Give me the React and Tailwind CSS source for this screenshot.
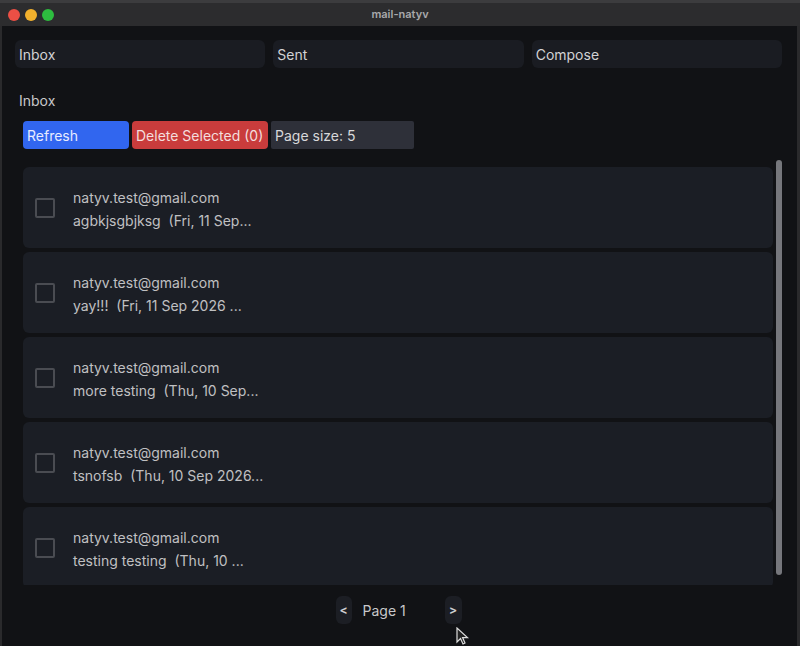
import { useState } from 'react';

const emails = [
  { from: 'natyv.test@gmail.com', preview: 'agbkjsgbjksg  (Fri, 11 Sep...' },
  { from: 'natyv.test@gmail.com', preview: 'yay!!!  (Fri, 11 Sep 2026 ...' },
  { from: 'natyv.test@gmail.com', preview: 'more testing  (Thu, 10 Sep...' },
  { from: 'natyv.test@gmail.com', preview: 'tsnofsb  (Thu, 10 Sep 2026...' },
  { from: 'natyv.test@gmail.com', preview: 'testing testing  (Thu, 10 ...' },
];

function EmailCard({ email, checked, onToggle }) {
  return (
    <div className="flex h-[81px] shrink-0 items-center rounded-md bg-[#1b1e25] pl-3">
      <button
        type="button"
        onClick={onToggle}
        className={`h-5 w-5 shrink-0 rounded-[2px] border-2 border-[#4a4c52] ${checked ? 'bg-[#3166ef]' : ''}`}
      />
      <div className="ml-[18px] flex flex-col whitespace-pre pt-[2px] text-[14px] leading-[23px] text-[#c0c0c2]">
        <span>{email.from}</span>
        <span>{email.preview}</span>
      </div>
    </div>
  );
}

export default function App() {
  const [selected, setSelected] = useState([]);

  const toggle = (i) =>
    setSelected((prev) => (prev.includes(i) ? prev.filter((x) => x !== i) : [...prev, i]));

  return (
    <div className="relative flex h-[646px] w-[800px] flex-col overflow-hidden bg-[#2b2b2d] font-['Inter',sans-serif]">
      {/* desktop strip */}
      <div className="h-[3px] bg-[#3c3c3e]" />

      {/* title bar */}
      <div className="relative flex h-[23px] items-center bg-[#2c2c2e] px-[8px]">
        <div className="flex gap-[5px]">
          <span className="h-3 w-3 rounded-full bg-[#ec4f45]" />
          <span className="h-3 w-3 rounded-full bg-[#f2b12d]" />
          <span className="h-3 w-3 rounded-full bg-[#2dbd3f]" />
        </div>
        <span className="absolute left-1/2 -translate-x-1/2 text-[11px] font-semibold text-[#a9a9ab]">
          mail-natyv
        </span>
      </div>

      {/* window body */}
      <div className="flex flex-1 flex-col border-l-[2px] border-r-[3px] border-[#2a2a2c] bg-[#111215] pl-[13px] pr-[15px] pt-[14px]">
        <nav className="grid grid-cols-3 gap-2">
          {['Inbox', 'Sent', 'Compose'].map((label) => (
            <button
              key={label}
              type="button"
              className="h-7 rounded-md bg-[#1a1c22] px-1 text-left text-[14px] text-[#d2d2d4]"
            >
              {label}
            </button>
          ))}
        </nav>

        <div className="mt-[23px] px-1 text-[14px] leading-5 text-[#c8c8ca]">Inbox</div>

        <div className="ml-2 mt-[10px] flex gap-[3px] text-[14px]">
          <button type="button" className="h-7 w-[106px] rounded-[4px] bg-[#3166ef] px-1 text-left text-[#e8ecff]">
            Refresh
          </button>
          <button type="button" className="h-7 w-[136px] rounded-[4px] bg-[#c93c3c] px-1 text-left text-[#f4dede]">
            Delete Selected ({selected.length})
          </button>
          <button type="button" className="h-7 w-[143px] rounded-[2px] bg-[#2e3039] px-1 text-left text-[#d8d8da]">
            Page size: 5
          </button>
        </div>

        <div className="ml-2 mt-[11px] flex h-[425px] gap-[3px]">
          <div className="flex flex-1 flex-col gap-1 overflow-hidden pt-[7px]">
            {emails.map((email, i) => (
              <EmailCard
                key={i}
                email={email}
                checked={selected.includes(i)}
                onToggle={() => toggle(i)}
              />
            ))}
          </div>
          <div className="mb-[10px] w-[6px] rounded-full bg-[#76777c]" />
        </div>

        <div className="mt-[11px] flex items-center justify-center text-[14px] text-[#c8c8ca]">
          <button type="button" className="h-7 w-4 rounded-md bg-[#1c1e24] text-[12px] font-bold text-[#cfcfd1]">
            &lt;
          </button>
          <span className="w-[93px] pl-[11px]">Page 1</span>
          <button type="button" className="h-7 w-[17px] rounded-md bg-[#1c1e24] text-[12px] font-bold text-[#cfcfd1]">
            &gt;
          </button>
        </div>
      </div>

      {/* mouse cursor */}
      <svg className="absolute left-[456px] top-[627px]" width="14" height="20" viewBox="0 0 14 20">
        <path d="M1 1 L1 15 L4.5 11.5 L7 17 L9 16 L6.6 10.6 L11.5 10.6 Z" fill="#222" stroke="#ddd" strokeWidth="1.2" />
      </svg>
    </div>
  );
}
